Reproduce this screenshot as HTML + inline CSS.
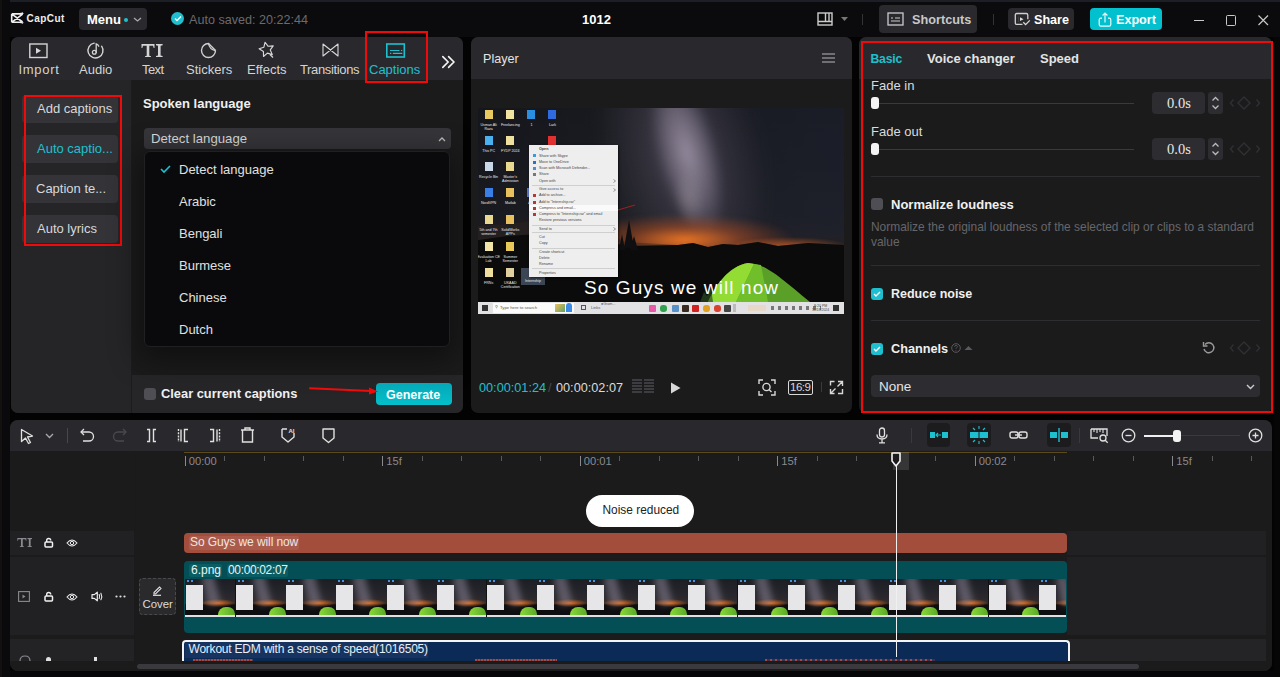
<!DOCTYPE html>
<html><head><meta charset="utf-8">
<style>
*{margin:0;padding:0;box-sizing:border-box}
html,body{width:1280px;height:677px;overflow:hidden;background:#030303;font-family:"Liberation Sans",sans-serif;color:#e4e4e4}
.a{position:absolute}
.t{position:absolute;white-space:nowrap;line-height:1}
svg{position:absolute;overflow:visible}
</style></head><body>
<div class="a" style="left:0;top:671px;width:1280px;height:6px;background:#060608"></div>
<!-- TOP BAR -->
<div class="a" style="left:0;top:0;width:1280px;height:37px;background:#0b0b0d"></div>
<div class="a" style="left:0;top:0;width:1280px;height:2px;background:#1c1f26"></div>
<div class="a" style="left:0;top:0;width:10px;height:677px;background:#0a0a0c"></div>
<div class="a" style="left:0;top:0;width:2px;height:677px;background:#121110"></div>
<div class="a" style="left:1274px;top:37px;width:6px;height:640px;background:#060607"></div>

<!-- logo -->
<svg style="left:10px;top:12px" width="15" height="13" viewBox="0 0 15 13"><path d="M1.7 1.9H9.5Q12 1.9 13.2 1M1.7 10.3H9.5Q12 10.3 13.2 11.2M1.7 1.9V10.3M2.6 2.6L12.6 10M2.6 9.6L12.6 2.2" stroke="#eee" stroke-width="1.6" fill="none" stroke-linejoin="round"/></svg>
<div class="t" style="left:26.5px;top:13.5px;font-size:10px;font-weight:bold;color:#eee;letter-spacing:0.45px">CapCut</div>

<div class="a" style="left:79px;top:8px;width:68px;height:22px;background:#2a2a2e;border-radius:4px"></div>
<div class="t" style="left:87px;top:13px;font-size:13px;font-weight:bold;color:#fff">Menu</div>
<div class="a" style="left:124px;top:18px;width:4px;height:4px;border-radius:50%;background:#1ec0cf"></div>
<svg style="left:133px;top:17px" width="9" height="5" viewBox="0 0 9 5"><path d="M1 1l3.5 3L8 1" stroke="#aaa" stroke-width="1.3" fill="none"/></svg>

<div class="a" style="left:171px;top:12px;width:13px;height:13px;border-radius:50%;background:#1ec0cf"></div>
<svg style="left:174px;top:15px" width="8" height="7" viewBox="0 0 8 7"><path d="M1 3.5l2 2L7 1.5" stroke="#fff" stroke-width="1.4" fill="none"/></svg>
<div class="t" style="left:189px;top:13.5px;font-size:12.6px;color:#6a6a6f">Auto saved: 20:22:44</div>

<div class="t" style="left:582px;top:13px;font-size:13px;font-weight:bold;color:#fff">1012</div>

<!-- layout icon -->
<svg style="left:817px;top:12px" width="16" height="14" viewBox="0 0 16 14"><rect x="1" y="1" width="14" height="12" fill="none" stroke="#ccc" stroke-width="1.4"/><path d="M1 9.5h14M8.5 1v8.5M12 1v8.5" stroke="#ccc" stroke-width="1.4"/></svg>
<svg style="left:841px;top:17px" width="8" height="5" viewBox="0 0 8 5"><path d="M0 0h7L3.5 4z" fill="#777"/></svg>
<div class="a" style="left:862px;top:14px;width:1px;height:11px;background:#333"></div>

<div class="a" style="left:879px;top:5px;width:98px;height:28px;background:#2a2a2e;border-radius:4px"></div>
<svg style="left:887px;top:12px" width="17" height="14" viewBox="0 0 17 14"><rect x="1" y="1" width="15" height="12" fill="none" stroke="#ccc" stroke-width="1.3"/><path d="M4 6h2M8 6h5M4 9h9" stroke="#ccc" stroke-width="1.2"/></svg>
<div class="t" style="left:912px;top:13.5px;font-size:12.7px;font-weight:bold;color:#c8c8c8">Shortcuts</div>
<div class="a" style="left:993px;top:14px;width:1px;height:11px;background:#333"></div>

<div class="a" style="left:1008px;top:8px;width:66px;height:22px;background:#2a2a2e;border-radius:4px"></div>
<svg style="left:1014px;top:12px" width="17" height="14" viewBox="0 0 17 14"><path d="M8.5 12.3H2.8Q1.3 12.3 1.3 10.8V3Q1.3 1.5 2.8 1.5H12.3Q13.8 1.5 13.8 3V7.3" fill="none" stroke="#cfcfcf" stroke-width="1.3"/><path d="M9.3 10.3L11.6 12.6 15.8 8.4" fill="none" stroke="#dcdcdc" stroke-width="1.3"/><path d="M6 5.3L9.5 7.2 6 9.1z" fill="#dcdcdc"/><path d="M4.6 4.5V10" stroke="#555" stroke-width=".6"/></svg>
<div class="t" style="left:1034px;top:13.5px;font-size:12.6px;font-weight:bold;color:#fff">Share</div>

<div class="a" style="left:1090px;top:8px;width:72px;height:22px;background:#02c0cd;border-radius:4px"></div>
<svg style="left:1097.5px;top:11.5px" width="14" height="15" viewBox="0 0 14 15"><path d="M4 6.2H2.8Q1.2 6.2 1.2 7.8V12.6Q1.2 14.2 2.8 14.2H11.2Q12.8 14.2 12.8 12.6V7.8Q12.8 6.2 11.2 6.2H10" stroke="#e8fbfc" stroke-width="1.2" fill="none"/><path d="M7 10.5V1.2M4.6 3.5L7 1.1 9.4 3.5" stroke="#e8fbfc" stroke-width="1.2" fill="none"/></svg>
<div class="t" style="left:1116px;top:13.5px;font-size:12.6px;font-weight:bold;color:#fff">Export</div>

<div class="a" style="left:1194px;top:19.6px;width:10px;height:1.3px;background:#c8c8c8"></div>
<div class="a" style="left:1226px;top:15.2px;width:10.3px;height:10.5px;border:1.3px solid #c8c8c8;border-radius:1.5px"></div>
<svg style="left:1257.7px;top:15.2px" width="10.5" height="10.5" viewBox="0 0 10.5 10.5"><path d="M0.5 0.5l9.5 9.5M10 0.5l-9.5 9.5" stroke="#c8c8c8" stroke-width="1.2"/></svg>

<!-- LEFT PANEL -->
<div class="a" id="lp" style="left:11px;top:37px;width:452px;height:376px;background:#1b1b1c;border-radius:7px;overflow:hidden">
  <div class="a" style="left:0;top:0;width:453px;height:43px;background:#29292d"></div>
  <div class="a" style="left:0;top:43px;width:120px;height:333px;background:#252528"></div>
  <div class="a" style="left:121px;top:338px;width:332px;height:38px;background:#262629"></div>
  <div class="a" style="left:119.5px;top:43px;width:1.5px;height:333px;background:#1c1c1d"></div>
</div>
<!-- tabs -->
<svg style="left:29px;top:42.5px" width="19" height="15" viewBox="0 0 19 15"><rect x="0.8" y="1" width="17.2" height="13.5" fill="none" stroke="#d4d4d4" stroke-width="1.4"/><path d="M7 4.7l5 3-5 3z" fill="#d8d8d8"/></svg>
<div class="t" style="left:18.5px;top:63px;font-size:13px;color:#d4d4d4;letter-spacing:0.7px">Import</div>
<svg style="left:87px;top:42px" width="17" height="17" viewBox="0 0 17 17"><path d="M14.64 4.2A7.5 7.5 0 1 1 7.2 1.11" fill="none" stroke="#d4d4d4" stroke-width="1.4" stroke-linecap="round"/><circle cx="7.3" cy="10.3" r="1.9" fill="none" stroke="#d4d4d4" stroke-width="1.3"/><path d="M9.2 10.3V1.8q1.8 .6 2.6 2.4" fill="none" stroke="#d4d4d4" stroke-width="1.3" stroke-linecap="round"/></svg>
<div class="t" style="left:79px;top:63px;font-size:13px;color:#d4d4d4">Audio</div>
<svg style="left:141px;top:43px" width="23" height="15" viewBox="0 0 23 15"><path d="M0.5 1h13v4h-0.8l-0.7-2.2H8.3V12.7l1.7 0.6V14H4v-0.7l1.7-0.6V2.8H2l-0.7 2.2H0.5z" fill="#d4d4d4"/><path d="M15 1h6.6v1.3l-2 0.5v9.8l2 0.5V14H15v-0.9l2-0.5V2.8l-2-0.5z" fill="#d4d4d4"/></svg>
<div class="t" style="left:142px;top:63px;font-size:13px;color:#d4d4d4;letter-spacing:-0.6px">Text</div>
<svg style="left:200px;top:42px" width="17" height="17" viewBox="0 0 17 17"><path d="M15.5 8.5A7 7 0 1 1 8.5 1.5L15.5 8.5" fill="none" stroke="#d0d0d0" stroke-width="1.4"/><path d="M8.5 1.5q1 6 7 7" fill="none" stroke="#d0d0d0" stroke-width="1.3"/></svg>
<div class="t" style="left:186px;top:63px;font-size:13px;color:#d4d4d4">Stickers</div>
<svg style="left:257px;top:41px" width="19" height="18" viewBox="0 0 19 18"><g transform="rotate(-12 9 8)"><path d="M9.5 1.2l2.2 4.6 5 .6-3.7 3.4 1 5-4.5-2.5-4.5 2.5 1-5L2.3 6.4l5-.6z" fill="none" stroke="#d8d8d8" stroke-width="1.15" stroke-linejoin="round"/></g><path d="M13 13.5l3 3" stroke="#d8d8d8" stroke-width="1.15"/></svg>
<div class="t" style="left:247px;top:63px;font-size:13px;color:#d4d4d4">Effects</div>
<svg style="left:322px;top:43px" width="17" height="14" viewBox="0 0 17 14"><path d="M1 1v12l15-12v12z" fill="none" stroke="#d8d8d8" stroke-width="1.1" stroke-linejoin="round"/></svg>
<div class="t" style="left:300px;top:63px;font-size:13px;color:#d4d4d4;letter-spacing:-0.35px">Transitions</div>
<svg style="left:385px;top:42px" width="21" height="16" viewBox="0 0 21 16"><rect x="1.8" y="2" width="17.5" height="13" fill="none" stroke="#1ec0cf" stroke-width="1.6"/><path d="M5 8.5h9.5M16 8.5h1.3M5 11.3h1.3M7.8 11.3h9.5" stroke="#1ec0cf" stroke-width="1.2"/></svg>
<div class="t" style="left:369px;top:63px;font-size:13px;color:#1ec0cf">Captions</div>
<div class="a" style="left:365px;top:31px;width:62.5px;height:52px;border:2px solid #f00a0a"></div>
<svg style="left:441px;top:55px" width="14" height="14" viewBox="0 0 14 14"><path d="M1.8 1.6l5.3 5.4-5.3 5.4M7.6 1.6l5.3 5.4-5.3 5.4" fill="none" stroke="#f4f4f4" stroke-width="1.6" stroke-linecap="round"/></svg>

<!-- sidebar buttons -->
<div class="a" style="left:22px;top:95px;width:96px;height:28px;background:#343438;border-radius:4px"></div>
<div class="t" style="left:37px;top:102px;font-size:13px;color:#d8d8d8">Add captions</div>
<div class="a" style="left:22px;top:135px;width:96px;height:28px;background:#343438;border-radius:4px"></div>
<div class="t" style="left:37px;top:142px;font-size:13px;color:#1ec0cf">Auto captio...</div>
<div class="a" style="left:22px;top:175px;width:96px;height:28px;background:#343438;border-radius:4px"></div>
<div class="t" style="left:36px;top:182px;font-size:13px;color:#d8d8d8">Caption te...</div>
<div class="a" style="left:22px;top:215px;width:96px;height:28px;background:#343438;border-radius:4px"></div>
<div class="t" style="left:37px;top:222px;font-size:13px;color:#d8d8d8">Auto lyrics</div>
<div class="a" style="left:24px;top:95px;width:98px;height:151px;border:2px solid #f00a0a"></div>

<!-- captions content -->
<div class="t" style="left:143px;top:97px;font-size:13px;font-weight:bold;color:#f0f0f0">Spoken language</div>
<div class="a" style="left:144px;top:128px;width:307px;height:21px;background:#36363a;border-radius:4px"></div>
<div class="t" style="left:151px;top:132px;font-size:13.2px;color:#dcdcdc">Detect language</div>
<svg style="left:438px;top:137px" width="8" height="5" viewBox="0 0 8 5"><path d="M1 4l3-3 3 3" fill="none" stroke="#bbb" stroke-width="1.3"/></svg>
<div class="a" style="left:144px;top:151px;width:306px;height:196px;background:#0a0a0c;border:1px solid #202023;border-radius:6px;box-shadow:0 8px 30px 6px rgba(0,0,0,.42)"></div>
<svg style="left:160px;top:165px" width="11" height="8" viewBox="0 0 11 8"><path d="M1 4l3 3 6-6" fill="none" stroke="#1ec0cf" stroke-width="1.6"/></svg>
<div class="t" style="left:179px;top:163px;font-size:13px;color:#e0e0e0">Detect language</div>
<div class="t" style="left:179px;top:195px;font-size:13px;color:#e0e0e0">Arabic</div>
<div class="t" style="left:179px;top:227px;font-size:13px;color:#e0e0e0">Bengali</div>
<div class="t" style="left:179px;top:259px;font-size:13px;color:#e0e0e0">Burmese</div>
<div class="t" style="left:179px;top:291px;font-size:13px;color:#e0e0e0">Chinese</div>
<div class="t" style="left:179px;top:323px;font-size:13px;color:#e0e0e0">Dutch</div>

<div class="a" style="left:144px;top:388px;width:12px;height:12px;background:#4e4e54;border-radius:3px"></div>
<div class="t" style="left:161px;top:388px;font-size:12.85px;font-weight:bold;color:#f0f0f0">Clear current captions</div>
<div class="a" style="left:375.7px;top:383px;width:76px;height:22px;background:linear-gradient(180deg,#05a8b6,#04bfcb);border-radius:4px"></div>
<div class="t" style="left:386px;top:388.5px;font-size:12.5px;font-weight:bold;color:#fff">Generate</div>
<svg style="left:308px;top:384px" width="72" height="12" viewBox="0 0 72 12"><path d="M2 4.2L63 6.9" stroke="#f00a0a" stroke-width="2" stroke-linecap="round"/><path d="M70 7.4L61 3.6 61 10.6z" fill="#f00a0a"/></svg>

<!-- PLAYER PANEL -->
<div class="a" id="pp" style="left:471px;top:37px;width:381px;height:376px;background:#1b1b1c;border-radius:7px;overflow:hidden">
  <div class="a" style="left:0;top:0;width:381px;height:42px;background:#29292d"></div>
  <div class="t" style="left:12px;top:16px;font-size:12.6px;color:#e4e4e4">Player</div>
  <div class="a" style="left:351px;top:16px;width:13px;height:1.5px;background:#707074;box-shadow:0 4px 0 #707074,0 8px 0 #707074"></div>
<div class="a" style="left:7px;top:71px;width:366px;height:206px;overflow:hidden;background:#17181c">
<div class="a" style="left:0;top:0;width:366px;height:206px;background:linear-gradient(180deg,#191a20 0%,#1d1e24 50%,#2a2324 85%,#2a1f1c 100%)"></div>
<div class="a" style="left:0;top:0;width:366px;height:130px;background:linear-gradient(90deg,rgba(0,0,0,.15) 0%,rgba(0,0,0,0) 40%,rgba(28,34,52,.35) 100%)"></div>
<div class="a" style="left:130px;top:-60px;width:160px;height:250px;background:radial-gradient(ellipse at 50% 42%,rgba(110,100,120,.5),rgba(90,80,100,0) 70%);transform:rotate(-15deg);filter:blur(8px)"></div>
<div class="a" style="left:178px;top:-40px;width:62px;height:170px;background:radial-gradient(ellipse at 50% 50%,rgba(175,165,185,.75),rgba(140,130,150,.45) 45%,rgba(90,80,100,0) 72%);transform:rotate(-15deg);filter:blur(4px)"></div>
<div class="a" style="left:196px;top:60px;width:30px;height:60px;background:radial-gradient(ellipse at 50% 50%,rgba(150,140,150,.5),rgba(120,110,120,0) 72%);transform:rotate(-8deg);filter:blur(3px)"></div>
<div class="a" style="left:90px;top:90px;width:276px;height:55px;background:radial-gradient(ellipse 110px 26px at 117px 42px,rgba(245,120,35,.95),rgba(190,80,30,.5) 50%,rgba(120,60,40,0) 100%);filter:blur(2px)"></div>
<div class="a" style="left:250px;top:124px;width:116px;height:18px;background:radial-gradient(ellipse 60px 9px at 60px 14px,rgba(220,100,40,.7),rgba(220,100,40,0) 100%)"></div>
<svg style="left:0;top:0" width="366" height="206" viewBox="0 0 366 206"><path d="M0 118 L30 116 60 112 90 118 120 124 140 130 147 134 200 137 215 135 230 139 245 136 260 137 280 134 300 138 330 135 366 137 V206 H0Z" fill="#2e2620" opacity=".45"/><path d="M0 132 L30 128 60 126 90 131 120 134 140 136 147 138 200 137 215 135 230 139 245 136 260 137 280 134 300 138 330 135 366 137 V206 H0Z" fill="#0b0b0c"/><path d="M146 140 l5 -28 5 28z M141 142 l3 -16 3 16z M152 142l4-14 4 14z" fill="#0f0f11"/>
<path d="M230 194 C236 180 250 158 270 155 C288 156 300 168 332 194Z" fill="#5aa028"/><path d="M230 194 C236 180 250 158 270 155 L276 156 L258 194Z" fill="#92dc34"/><path d="M258 194 L276 156 L283 157 L290 194Z" fill="#70be2a"/><path d="M222 194 l4-10 3 4 4-8 2 14z" fill="#2a4a20" opacity=".7"/></svg>
<div class="a" style="left:7px;top:2px;width:8px;height:9px;background:#e8c860"></div>
<div class="a" style="left:28px;top:2px;width:8px;height:9px;background:#f0e2a0"></div>
<div class="a" style="left:49px;top:2px;width:8px;height:9px;background:#2a8fe0"></div>
<div class="a" style="left:70px;top:2px;width:8px;height:9px;background:#2f6ae0"></div>
<div class="a" style="left:7px;top:28px;width:8px;height:9px;background:#4ab0f0"></div>
<div class="a" style="left:28px;top:28px;width:8px;height:9px;background:#f0e0a0"></div>
<div class="a" style="left:70px;top:28px;width:8px;height:9px;background:#e03030"></div>
<div class="a" style="left:7px;top:54px;width:8px;height:9px;background:#c8d8e8"></div>
<div class="a" style="left:28px;top:54px;width:8px;height:9px;background:#e8d890"></div>
<div class="a" style="left:7px;top:80px;width:8px;height:9px;background:#3a7fe8"></div>
<div class="a" style="left:28px;top:80px;width:8px;height:9px;background:#e8c060"></div>
<div class="a" style="left:49px;top:80px;width:8px;height:9px;background:#5a70c0"></div>
<div class="a" style="left:7px;top:107px;width:8px;height:9px;background:#e8d890"></div>
<div class="a" style="left:28px;top:107px;width:8px;height:9px;background:#e8c060"></div>
<div class="a" style="left:7px;top:134px;width:8px;height:9px;background:#f0e4a8"></div>
<div class="a" style="left:28px;top:134px;width:8px;height:9px;background:#e8c858"></div>
<div class="a" style="left:7px;top:160px;width:8px;height:9px;background:#f0e0a0"></div>
<div class="a" style="left:28px;top:160px;width:8px;height:9px;background:#e0d0a0"></div>
<div class="a" style="left:43px;top:160px;width:24px;height:17px;background:rgba(120,140,170,.45)"></div>
<div class="t" style="left:-1.4px;top:15.0px;width:24px;text-align:center;font-size:3.6px;line-height:4.2px;color:#e8e8e8;white-space:nowrap">Usman Ali<br>Raza</div>
<div class="t" style="left:20.3px;top:15.0px;width:24px;text-align:center;font-size:3.6px;line-height:4.2px;color:#e8e8e8;white-space:nowrap">Freelancing</div>
<div class="t" style="left:41.4px;top:15.0px;width:24px;text-align:center;font-size:3.6px;line-height:4.2px;color:#e8e8e8;white-space:nowrap">1</div>
<div class="t" style="left:62.5px;top:15.0px;width:24px;text-align:center;font-size:3.6px;line-height:4.2px;color:#e8e8e8;white-space:nowrap">Lark</div>
<div class="t" style="left:-1.4px;top:41.0px;width:24px;text-align:center;font-size:3.6px;line-height:4.2px;color:#e8e8e8;white-space:nowrap">This PC</div>
<div class="t" style="left:20.3px;top:41.0px;width:24px;text-align:center;font-size:3.6px;line-height:4.2px;color:#e8e8e8;white-space:nowrap">FYDP 2024</div>
<div class="t" style="left:-1.4px;top:67.0px;width:24px;text-align:center;font-size:3.6px;line-height:4.2px;color:#e8e8e8;white-space:nowrap">Recycle Bin</div>
<div class="t" style="left:20.3px;top:67.0px;width:24px;text-align:center;font-size:3.6px;line-height:4.2px;color:#e8e8e8;white-space:nowrap">Master's<br>Admission</div>
<div class="t" style="left:-1.4px;top:93.0px;width:24px;text-align:center;font-size:3.6px;line-height:4.2px;color:#e8e8e8;white-space:nowrap">NordVPN</div>
<div class="t" style="left:20.3px;top:93.0px;width:24px;text-align:center;font-size:3.6px;line-height:4.2px;color:#e8e8e8;white-space:nowrap">Matlab</div>
<div class="t" style="left:-1.4px;top:120.0px;width:24px;text-align:center;font-size:3.6px;line-height:4.2px;color:#e8e8e8;white-space:nowrap">5th and 7th<br>semester</div>
<div class="t" style="left:20.3px;top:120.0px;width:24px;text-align:center;font-size:3.6px;line-height:4.2px;color:#e8e8e8;white-space:nowrap">SolidWorks<br>APPs</div>
<div class="t" style="left:-1.4px;top:147.0px;width:24px;text-align:center;font-size:3.6px;line-height:4.2px;color:#e8e8e8;white-space:nowrap">Evaluation CE<br>Lab</div>
<div class="t" style="left:20.3px;top:147.0px;width:24px;text-align:center;font-size:3.6px;line-height:4.2px;color:#e8e8e8;white-space:nowrap">Summer<br>Semester</div>
<div class="t" style="left:-1.4px;top:173.0px;width:24px;text-align:center;font-size:3.6px;line-height:4.2px;color:#e8e8e8;white-space:nowrap">FRNs</div>
<div class="t" style="left:20.3px;top:173.0px;width:24px;text-align:center;font-size:3.6px;line-height:4.2px;color:#e8e8e8;white-space:nowrap">UKAAD<br>Certification</div>
<div class="t" style="left:41.4px;top:93.0px;width:24px;text-align:center;font-size:3.6px;line-height:4.2px;color:#e8e8e8;white-space:nowrap">Abe</div>
<div class="t" style="left:45px;top:172px;width:20px;text-align:center;font-size:3.6px;color:#e8e8e8">Internship</div>
<div class="a" style="left:51px;top:37px;width:89px;height:132px;background:#eeeeee;box-shadow:1px 1px 2px rgba(0,0,0,.6)"></div>
<div class="a" style="left:51px;top:97px;width:89px;height:6px;background:#fafafa"></div>
<div class="a" style="left:54px;top:77.0px;width:83px;height:1px;background:#cfcfcf"></div>
<div class="a" style="left:54px;top:116.5px;width:83px;height:1px;background:#cfcfcf"></div>
<div class="a" style="left:54px;top:124.0px;width:83px;height:1px;background:#cfcfcf"></div>
<div class="a" style="left:54px;top:139.5px;width:83px;height:1px;background:#cfcfcf"></div>
<div class="a" style="left:54px;top:160.0px;width:83px;height:1px;background:#cfcfcf"></div>
<div class="t" style="left:61px;top:40.1px;font-size:3.7px;font-weight:bold;color:#444">Open</div>
<div class="t" style="left:61px;top:46.5px;font-size:3.7px;color:#444">Share with Skype</div>
<div class="a" style="left:55px;top:46.3px;width:3px;height:3px;background:#3a9ae0"></div>
<div class="t" style="left:61px;top:52.7px;font-size:3.7px;color:#444">Move to OneDrive</div>
<div class="a" style="left:55px;top:52.5px;width:3px;height:3px;background:#2a70d0"></div>
<div class="t" style="left:61px;top:59.1px;font-size:3.7px;color:#444">Scan with Microsoft Defender...</div>
<div class="a" style="left:55px;top:58.9px;width:3px;height:3px;background:#4a90d0"></div>
<div class="t" style="left:61px;top:65.3px;font-size:3.7px;color:#444">Share</div>
<div class="a" style="left:55px;top:65.1px;width:3px;height:3px;background:#777"></div>
<div class="t" style="left:61px;top:71.7px;font-size:3.7px;color:#444">Open with</div>
<div class="t" style="left:61px;top:80.2px;font-size:3.7px;color:#444">Give access to</div>
<div class="t" style="left:61px;top:86.4px;font-size:3.7px;color:#444">Add to archive...</div>
<div class="a" style="left:55px;top:86.2px;width:3px;height:3px;background:#b03a3a"></div>
<div class="t" style="left:61px;top:92.7px;font-size:3.7px;color:#444">Add to &quot;Internship.rar&quot;</div>
<div class="a" style="left:55px;top:92.5px;width:3px;height:3px;background:#b03a3a"></div>
<div class="t" style="left:61px;top:99.0px;font-size:3.7px;color:#444">Compress and email...</div>
<div class="a" style="left:55px;top:98.8px;width:3px;height:3px;background:#b03a3a"></div>
<div class="t" style="left:61px;top:105.2px;font-size:3.7px;color:#444">Compress to &quot;Internship.rar&quot; and email</div>
<div class="a" style="left:55px;top:105.0px;width:3px;height:3px;background:#b03a3a"></div>
<div class="t" style="left:61px;top:111.4px;font-size:3.7px;color:#444">Restore previous versions</div>
<div class="t" style="left:61px;top:119.5px;font-size:3.7px;color:#444">Send to</div>
<div class="t" style="left:61px;top:128.1px;font-size:3.7px;color:#444">Cut</div>
<div class="t" style="left:61px;top:134.3px;font-size:3.7px;color:#444">Copy</div>
<div class="t" style="left:61px;top:142.7px;font-size:3.7px;color:#444">Create shortcut</div>
<div class="t" style="left:61px;top:149.0px;font-size:3.7px;color:#444">Delete</div>
<div class="t" style="left:61px;top:155.3px;font-size:3.7px;color:#444">Rename</div>
<div class="t" style="left:61px;top:163.6px;font-size:3.7px;color:#444">Properties</div>
<svg style="left:135px;top:71.0px" width="3" height="4" viewBox="0 0 3 4"><path d="M0.5 0.5L2.5 2 0.5 3.5" fill="none" stroke="#555" stroke-width=".6"/></svg>
<svg style="left:135px;top:79.5px" width="3" height="4" viewBox="0 0 3 4"><path d="M0.5 0.5L2.5 2 0.5 3.5" fill="none" stroke="#555" stroke-width=".6"/></svg>
<svg style="left:135px;top:118.8px" width="3" height="4" viewBox="0 0 3 4"><path d="M0.5 0.5L2.5 2 0.5 3.5" fill="none" stroke="#555" stroke-width=".6"/></svg>
<svg style="left:140px;top:97px" width="18" height="6" viewBox="0 0 18 6"><path d="M0 5L17 0" stroke="#c02020" stroke-width="0.8"/></svg>
<div class="a" style="left:0;top:194px;width:366px;height:12px;background:#e2e2e4"></div>
<div class="a" style="left:15px;top:195px;width:81px;height:10px;background:#fbfbfb"></div>
<div class="a" style="left:4px;top:197px;width:6px;height:6px;background:linear-gradient(90deg,#333 45%,transparent 45% 55%,#333 55%),linear-gradient(180deg,transparent 45%,#e2e2e4 45% 55%,transparent 55%)"></div>
<div class="t" style="left:17px;top:197.5px;font-size:3.8px;color:#555">&#9906;</div>
<div class="t" style="left:22px;top:197.5px;font-size:4.2px;color:#555">Type here to search</div>
<div class="a" style="left:77px;top:196px;width:10px;height:8px;background:linear-gradient(135deg,#f0c060,#60a060)"></div>
<div class="a" style="left:88px;top:195px;width:6px;height:9px;border-radius:3px 3px 0 0;background:#3a8ae8"></div>
<div class="a" style="left:103px;top:197px;width:5px;height:5px;border:0.7px solid #555"></div>
<div class="t" style="left:113px;top:197.5px;font-size:4px;color:#555">Links</div>
<div class="t" style="left:123px;top:195px;font-size:3.6px;color:#555">&#9679;Gram...</div>
<div class="a" style="left:171px;top:196.5px;width:7px;height:7px;border-radius:1px;background:#e858a8"></div>
<div class="a" style="left:182px;top:196.5px;width:7px;height:7px;border-radius:3px;background:#30a050"></div>
<div class="a" style="left:194px;top:196.5px;width:7px;height:7px;border-radius:1px;background:#5a90c8"></div>
<div class="a" style="left:204px;top:196.5px;width:7px;height:7px;border-radius:1px;background:#3a2a20"></div>
<div class="a" style="left:214px;top:196.5px;width:7px;height:7px;border-radius:1px;background:#d02020"></div>
<div class="a" style="left:225px;top:196.5px;width:7px;height:7px;border-radius:3px;background:#e0a020"></div>
<div class="a" style="left:236px;top:196.5px;width:7px;height:7px;border-radius:3px;background:#d84030"></div>
<div class="a" style="left:246px;top:196.5px;width:7px;height:7px;border-radius:1px;background:#444"></div>
<div class="a" style="left:255px;top:196px;width:3px;height:8px;background:#bbb"></div>
<div class="a" style="left:270px;top:197px;width:18px;height:6px;background:#e8d8c8"></div>
<div class="a" style="left:293px;top:198px;width:50px;height:4px;background:repeating-linear-gradient(90deg,#777 0 3px,transparent 3px 7px)"></div>
<div class="t" style="left:334px;top:195.5px;font-size:3.5px;color:#444;line-height:4px;text-align:center">8:20 PM<br>11/18/2024</div>
<div class="a" style="left:355px;top:197px;width:6px;height:6px;background:#333"></div>
<div class="t" style="left:106px;top:170px;font-size:19px;color:#fff;letter-spacing:1.1px">So Guys we will now</div>
</div>
  <div class="t" style="left:8px;top:345px;font-size:12.7px;color:#1ec0cf">00:00:01:24</div>
  <div class="t" style="left:77px;top:345px;font-size:12.7px;color:#4a4a4e">/</div>
  <div class="t" style="left:85px;top:345px;font-size:12.7px;color:#dcdcdc">00:00:02:07</div>
  <svg style="left:161px;top:342px" width="23" height="16" viewBox="0 0 23 16"><path d="M0 1h10M0 4h10M0 7h10M0 10h10M0 13h10M12 1h10M12 4h10M12 7h10M12 10h10M12 13h10" stroke="#4a4a4e" stroke-width="1.6"/></svg>
  <svg style="left:199px;top:345px" width="11" height="12" viewBox="0 0 11 12"><path d="M1 0.5L10.5 6 1 11.5z" fill="#d8d8d8"/></svg>
  <svg style="left:287px;top:342px" width="18" height="17" viewBox="0 0 18 17"><path d="M1 5V1h4M13 1h4v4M17 12v4h-4M5 16H1v-4" fill="none" stroke="#d8d8d8" stroke-width="1.4"/><circle cx="8.5" cy="8" r="3.6" fill="none" stroke="#d8d8d8" stroke-width="1.4"/><path d="M11 10.5l2.5 2.5" stroke="#d8d8d8" stroke-width="1.4"/></svg>
  <div class="a" style="left:317px;top:343px;width:25px;height:15px;border:1.3px solid #d8d8d8;border-radius:2px"></div>
  <div class="t" style="left:319px;top:345px;font-size:11.5px;color:#d8d8d8;letter-spacing:-0.5px">16:9</div>
  <div class="a" style="left:350px;top:345px;width:1px;height:10px;background:#3a3a3e"></div>
  <svg style="left:357.7px;top:342.5px" width="15" height="15" viewBox="0 0 15 15"><path d="M1.5 5.5V1.5H5.5M9 1.5h4.5v4.5M13.5 9v4.5H9M5.5 13.5H1.5V9M8.5 6.5l4.5-4.5M2 13l4.5-4.5" fill="none" stroke="#d8d8d8" stroke-width="1.4"/></svg>
</div>

<!-- RIGHT PANEL -->
<div class="a" id="rp" style="left:859px;top:37px;width:413px;height:376px;background:#1b1b1c;border-radius:7px;overflow:hidden">
  <div class="a" style="left:0;top:0;width:413px;height:42px;background:#29292d"></div>
</div>
<div class="t" style="left:870.5px;top:52.5px;font-size:12.2px;font-weight:bold;color:#1ec0cf;letter-spacing:-0.2px">Basic</div>
<div class="t" style="left:927px;top:52px;font-size:13px;font-weight:bold;color:#e4e4e4">Voice changer</div>
<div class="t" style="left:1040px;top:52px;font-size:13px;font-weight:bold;color:#e4e4e4">Speed</div>

<div class="t" style="left:871px;top:79px;font-size:13px;color:#dcdcdc">Fade in</div>
<div class="a" style="left:879px;top:102.5px;width:255px;height:1.5px;background:#3a3a3e"></div>
<div class="a" style="left:871px;top:97px;width:8px;height:12px;background:#f4f4f4;border-radius:3px"></div>
<div class="a" style="left:1152px;top:92px;width:53px;height:22px;background:#2d2d31;border-radius:4px"></div>
<div class="t" style="left:1167px;top:96px;font-size:14.5px;color:#e8e8e8;font-family:'Liberation Serif',serif">0.0s</div>
<div class="a" style="left:1208px;top:92px;width:15px;height:22px;background:#2d2d31;border-radius:3px"></div>
<svg style="left:1211px;top:96px" width="9" height="14" viewBox="0 0 9 14"><path d="M1.5 4.5l3-3 3 3M1.5 9.5l3 3 3-3" fill="none" stroke="#bbb" stroke-width="1.3"/></svg>
<svg style="left:1229px;top:98px" width="32" height="10" viewBox="0 0 32 10"><path d="M4.5 1.5L1.5 5l3 3.5M27.5 1.5l3 3.5-3 3.5M15 -1l6 6-6 6-6-6z" fill="none" stroke="#303034" stroke-width="1.4"/></svg>

<div class="t" style="left:871px;top:125px;font-size:13px;color:#dcdcdc">Fade out</div>
<div class="a" style="left:879px;top:148.5px;width:255px;height:1.5px;background:#3a3a3e"></div>
<div class="a" style="left:871px;top:143px;width:8px;height:12px;background:#f4f4f4;border-radius:3px"></div>
<div class="a" style="left:1152px;top:138px;width:53px;height:22px;background:#2d2d31;border-radius:4px"></div>
<div class="t" style="left:1167px;top:142px;font-size:14.5px;color:#e8e8e8;font-family:'Liberation Serif',serif">0.0s</div>
<div class="a" style="left:1208px;top:138px;width:15px;height:22px;background:#2d2d31;border-radius:3px"></div>
<svg style="left:1211px;top:142px" width="9" height="14" viewBox="0 0 9 14"><path d="M1.5 4.5l3-3 3 3M1.5 9.5l3 3 3-3" fill="none" stroke="#bbb" stroke-width="1.3"/></svg>
<svg style="left:1229px;top:144px" width="32" height="10" viewBox="0 0 32 10"><path d="M4.5 1.5L1.5 5l3 3.5M27.5 1.5l3 3.5-3 3.5M15 -1l6 6-6 6-6-6z" fill="none" stroke="#303034" stroke-width="1.4"/></svg>

<div class="a" style="left:871px;top:176px;width:389px;height:1px;background:#2e2e32"></div>
<div class="a" style="left:871px;top:198px;width:12px;height:12px;background:#4e4e54;border-radius:3px"></div>
<div class="t" style="left:891px;top:198px;font-size:13px;font-weight:bold;color:#f0f0f0">Normalize loudness</div>
<div class="t" style="left:871px;top:220px;font-size:11.95px;color:#66666a;line-height:15px;white-space:normal;width:395px">Normalize the original loudness of the selected clip or clips to a standard value</div>
<div class="a" style="left:871px;top:265px;width:389px;height:1px;background:#2e2e32"></div>

<div class="a" style="left:871px;top:288px;width:12px;height:12px;background:#1ec0cf;border-radius:3px"></div>
<svg style="left:873px;top:290px" width="8" height="8" viewBox="0 0 8 8"><path d="M1 4l2 2 4-4" fill="none" stroke="#fff" stroke-width="1.4"/></svg>
<div class="t" style="left:891px;top:288px;font-size:12.5px;font-weight:bold;color:#f0f0f0">Reduce noise</div>
<div class="a" style="left:871px;top:320px;width:389px;height:1px;background:#2e2e32"></div>

<div class="a" style="left:871px;top:343px;width:12px;height:12px;background:#1ec0cf;border-radius:3px"></div>
<svg style="left:873px;top:345px" width="8" height="8" viewBox="0 0 8 8"><path d="M1 4l2 2 4-4" fill="none" stroke="#fff" stroke-width="1.4"/></svg>
<div class="t" style="left:891px;top:343px;font-size:12.7px;font-weight:bold;color:#f0f0f0">Channels</div>
<svg style="left:951px;top:343px" width="10" height="10" viewBox="0 0 10 10"><circle cx="5" cy="5" r="4.3" fill="none" stroke="#5a5a5e" stroke-width="1"/><path d="M3.6 3.8q.2-1.4 1.4-1.4t1.4 1.2q0 .8-1 1.3-.4.3-.4.9" fill="none" stroke="#5a5a5e" stroke-width=".9"/><circle cx="5" cy="7.4" r=".5" fill="#5a5a5e"/></svg>
<svg style="left:964px;top:345px" width="9" height="6" viewBox="0 0 9 6"><path d="M0.5 5L4.5 1 8.5 5z" fill="#5a5a5e"/></svg>
<svg style="left:1202px;top:341px" width="14" height="14" viewBox="0 0 14 14"><path d="M3 3.5A5 5 0 1 1 2 8" fill="none" stroke="#9a9a9e" stroke-width="1.4"/><path d="M1.5 1v4h4" fill="none" stroke="#9a9a9e" stroke-width="1.4"/></svg>
<svg style="left:1229px;top:343px" width="32" height="10" viewBox="0 0 32 10"><path d="M4.5 1.5L1.5 5l3 3.5M27.5 1.5l3 3.5-3 3.5M15 -1l6 6-6 6-6-6z" fill="none" stroke="#303034" stroke-width="1.4"/></svg>

<div class="a" style="left:871px;top:375px;width:389px;height:22px;background:#2d2d31;border-radius:4px"></div>
<div class="t" style="left:879px;top:380px;font-size:13.5px;color:#e4e4e4">None</div>
<svg style="left:1246px;top:384px" width="9" height="6" viewBox="0 0 9 6"><path d="M1 1l3.5 3.5L8 1" fill="none" stroke="#ccc" stroke-width="1.4"/></svg>

<div class="a" style="left:861px;top:41px;width:412px;height:372px;border:2px solid #f00a0a"></div>

<!-- TIMELINE -->
<div class="a" id="tl" style="left:10px;top:420px;width:1262px;height:251px;background:#1b1b1c;border-radius:8px;overflow:hidden">
  <div class="a" style="left:0;top:0;width:1262px;height:31px;background:#29292d"></div>
  <div class="a" style="left:124px;top:31px;width:1138px;height:220px;background:#1b1b1c;border-radius:0 0 8px 0"></div>
  <div class="a" style="left:0;top:111px;width:124px;height:24px;background:#212124"></div>
  <div class="a" style="left:0;top:137px;width:124px;height:78px;background:#212124"></div>
  <div class="a" style="left:0;top:219px;width:124px;height:22px;background:#232325"></div>
  <div class="a" style="left:1057px;top:111px;width:199px;height:24px;background:#212124"></div>
  <div class="a" style="left:1057px;top:137px;width:199px;height:78px;background:#212124"></div>
  <div class="a" style="left:1057px;top:219px;width:199px;height:22px;background:#242426"></div>
  <div class="a" style="left:124px;top:31px;width:1px;height:219px;background:#1a1a1c"></div>
</div>
<!-- toolbar icons -->
<svg style="left:20px;top:428px" width="14" height="16" viewBox="0 0 14 16"><path d="M1.5 1.5L12.5 8 7.5 9 10.5 14.5 8.5 15.5 5.5 10 1.5 13.5z" fill="none" stroke="#e0e0e0" stroke-width="1.3" stroke-linejoin="round"/></svg>
<svg style="left:45px;top:433px" width="9" height="6" viewBox="0 0 9 6"><path d="M1 1l3.5 3.5L8 1" fill="none" stroke="#aaa" stroke-width="1.3"/></svg>
<div class="a" style="left:67px;top:428px;width:1px;height:15px;background:#48484c"></div>
<svg style="left:80px;top:428px" width="15" height="15" viewBox="0 0 15 15"><path d="M4 1L1 4l3 3" fill="none" stroke="#e0e0e0" stroke-width="1.3"/><path d="M1.5 4H9a4.5 4.5 0 0 1 0 9H3" fill="none" stroke="#e0e0e0" stroke-width="1.3"/></svg>
<svg style="left:112px;top:428px" width="15" height="15" viewBox="0 0 15 15"><path d="M11 1l3 3-3 3" fill="none" stroke="#4a4a4e" stroke-width="1.3"/><path d="M13.5 4H6a4.5 4.5 0 0 0 0 9h6" fill="none" stroke="#4a4a4e" stroke-width="1.3"/></svg>
<svg style="left:146px;top:428px" width="11" height="15" viewBox="0 0 11 15"><path d="M1 1.5h2.5v12H1M10 1.5H7.5v12H10" fill="none" stroke="#e0e0e0" stroke-width="1.4"/></svg>
<svg style="left:177px;top:428px" width="12" height="15" viewBox="0 0 12 15"><path d="M1.5 1v13" stroke="#e0e0e0" stroke-width="1.4" stroke-dasharray="2 1.2"/><path d="M11 1.5H7.5v12H11M4 1.5v12" fill="none" stroke="#e0e0e0" stroke-width="1.4"/></svg>
<svg style="left:209px;top:428px" width="12" height="15" viewBox="0 0 12 15"><path d="M10.5 1v13" stroke="#e0e0e0" stroke-width="1.4" stroke-dasharray="2 1.2"/><path d="M1 1.5h3.5v12H1M8 1.5v12" fill="none" stroke="#e0e0e0" stroke-width="1.4"/></svg>
<svg style="left:240px;top:427px" width="15" height="16" viewBox="0 0 15 16"><path d="M1 3h13M5 3V1h5v2M2.5 3v12h10V3" fill="none" stroke="#e0e0e0" stroke-width="1.4"/></svg>
<svg style="left:281px;top:427px" width="14" height="16" viewBox="0 0 14 16"><path d="M1 2h5M1 2v8l6 5 6-5V6" fill="none" stroke="#e0e0e0" stroke-width="1.4" stroke-linejoin="round"/><text x="7.5" y="6" font-size="6" font-weight="bold" fill="#e0e0e0" font-family="Liberation Sans">AI</text></svg>
<svg style="left:322px;top:428px" width="13" height="15" viewBox="0 0 13 15"><path d="M1 1h11v9l-5.5 4.5L1 10z" fill="none" stroke="#e0e0e0" stroke-width="1.4" stroke-linejoin="round"/></svg>

<svg style="left:876px;top:427px" width="12" height="17" viewBox="0 0 12 17"><rect x="3.5" y="1" width="5" height="9" rx="2.5" fill="none" stroke="#e0e0e0" stroke-width="1.3"/><path d="M1 7.5q0 4.5 5 4.5t5-4.5M6 12v3.5M3 15.8h6" fill="none" stroke="#e0e0e0" stroke-width="1.3"/></svg>
<div class="a" style="left:911px;top:428px;width:1px;height:15px;background:#3a3a3e"></div>
<div class="a" style="left:927px;top:423px;width:23px;height:24px;background:#1c1c1f;border-radius:4px"></div>
<svg style="left:929px;top:430px" width="20" height="10" viewBox="0 0 20 10"><rect x="1" y="2" width="5" height="6" fill="#1ec0cf"/><rect x="13" y="2" width="6" height="6" fill="#1ec0cf"/><path d="M12 5H7M9 3L7 5l2 2" fill="none" stroke="#1ec0cf" stroke-width="1.1"/></svg>
<div class="a" style="left:967px;top:423px;width:24px;height:24px;background:#1c1c1f;border-radius:4px"></div>
<svg style="left:969px;top:425px" width="20" height="20" viewBox="0 0 20 20"><rect x="1" y="7" width="18" height="6" fill="#1ec0cf"/><path d="M10 1v3M10 16v3M4 3l2 2M16 3l-2 2M4 17l2-2M16 17l-2-2" stroke="#1ec0cf" stroke-width="1.1"/><path d="M10 7v6" stroke="#1c1c1f" stroke-width="1"/></svg>
<svg style="left:1009px;top:430px" width="19" height="10" viewBox="0 0 19 10"><rect x="1" y="2" width="8" height="6" rx="2" fill="none" stroke="#e0e0e0" stroke-width="1.4"/><rect x="10" y="2" width="8" height="6" rx="2" fill="none" stroke="#e0e0e0" stroke-width="1.4"/><path d="M6 5h7" stroke="#e0e0e0" stroke-width="1.4"/></svg>
<div class="a" style="left:1047px;top:423px;width:24px;height:24px;background:#1c1c1f;border-radius:4px"></div>
<svg style="left:1049px;top:427px" width="20" height="16" viewBox="0 0 20 16"><rect x="1" y="5" width="7" height="6" fill="#1ec0cf"/><rect x="12" y="5" width="7" height="6" fill="#1ec0cf"/><path d="M10 1v14" stroke="#1ec0cf" stroke-width="1.4"/></svg>
<div class="a" style="left:1079px;top:428px;width:1px;height:15px;background:#3a3a3e"></div>
<svg style="left:1090px;top:428px" width="19" height="15" viewBox="0 0 19 15"><path d="M1 1h16v7" fill="none" stroke="#e0e0e0" stroke-width="1.3"/><path d="M1 1v9h7" fill="none" stroke="#e0e0e0" stroke-width="1.3"/><path d="M4 1v3M7 1v4M10 1v3M13 1v4" stroke="#e0e0e0" stroke-width="1.1"/><circle cx="13" cy="10" r="3" fill="none" stroke="#e0e0e0" stroke-width="1.3"/><path d="M15.2 12.2l2.5 2.5" stroke="#e0e0e0" stroke-width="1.3"/></svg>
<svg style="left:1121px;top:428px" width="15" height="15" viewBox="0 0 15 15"><circle cx="7.5" cy="7.5" r="6.3" fill="none" stroke="#e0e0e0" stroke-width="1.3"/><path d="M4.5 7.5h6" stroke="#e0e0e0" stroke-width="1.3"/></svg>
<div class="a" style="left:1144px;top:435px;width:96px;height:1px;background:#3a3a3e"></div>
<div class="a" style="left:1144px;top:434.5px;width:32px;height:2px;background:#f0f0f0"></div>
<div class="a" style="left:1173px;top:430px;width:8px;height:12px;background:#f4f4f4;border-radius:3px"></div>
<svg style="left:1248px;top:428px" width="15" height="15" viewBox="0 0 15 15"><circle cx="7.5" cy="7.5" r="6.3" fill="none" stroke="#e0e0e0" stroke-width="1.3"/><path d="M4.5 7.5h6M7.5 4.5v6" stroke="#e0e0e0" stroke-width="1.3"/></svg>

<!-- ruler -->
<div class="a" style="left:184px;top:452px;width:883px;height:1px;background:#5a4a1c"></div>
<div class="a" style="left:184.8px;top:456px;width:1px;height:10px;background:#8a8a8e"></div>
<div class="t" style="left:188.8px;top:456px;font-size:11.2px;color:#8a8a8e">00:00</div>
<div class="a" style="left:224.3px;top:456px;width:1px;height:5px;background:#5a5a5e"></div>
<div class="a" style="left:263.8px;top:456px;width:1px;height:5px;background:#5a5a5e"></div>
<div class="a" style="left:303.3px;top:456px;width:1px;height:5px;background:#5a5a5e"></div>
<div class="a" style="left:342.8px;top:456px;width:1px;height:5px;background:#5a5a5e"></div>
<div class="a" style="left:382.3px;top:456px;width:1px;height:10px;background:#8a8a8e"></div>
<div class="t" style="left:386.3px;top:456px;font-size:11.2px;color:#8a8a8e">15f</div>
<div class="a" style="left:421.8px;top:456px;width:1px;height:5px;background:#5a5a5e"></div>
<div class="a" style="left:461.3px;top:456px;width:1px;height:5px;background:#5a5a5e"></div>
<div class="a" style="left:500.8px;top:456px;width:1px;height:5px;background:#5a5a5e"></div>
<div class="a" style="left:540.3px;top:456px;width:1px;height:5px;background:#5a5a5e"></div>
<div class="a" style="left:579.8px;top:456px;width:1px;height:10px;background:#8a8a8e"></div>
<div class="t" style="left:583.8px;top:456px;font-size:11.2px;color:#8a8a8e">00:01</div>
<div class="a" style="left:619.3px;top:456px;width:1px;height:5px;background:#5a5a5e"></div>
<div class="a" style="left:658.8px;top:456px;width:1px;height:5px;background:#5a5a5e"></div>
<div class="a" style="left:698.3px;top:456px;width:1px;height:5px;background:#5a5a5e"></div>
<div class="a" style="left:737.8px;top:456px;width:1px;height:5px;background:#5a5a5e"></div>
<div class="a" style="left:777.3px;top:456px;width:1px;height:10px;background:#8a8a8e"></div>
<div class="t" style="left:781.3px;top:456px;font-size:11.2px;color:#8a8a8e">15f</div>
<div class="a" style="left:816.8px;top:456px;width:1px;height:5px;background:#5a5a5e"></div>
<div class="a" style="left:856.3px;top:456px;width:1px;height:5px;background:#5a5a5e"></div>
<div class="a" style="left:895.8px;top:456px;width:1px;height:5px;background:#5a5a5e"></div>
<div class="a" style="left:935.3px;top:456px;width:1px;height:5px;background:#5a5a5e"></div>
<div class="a" style="left:974.8px;top:456px;width:1px;height:10px;background:#8a8a8e"></div>
<div class="t" style="left:978.8px;top:456px;font-size:11.2px;color:#8a8a8e">00:02</div>
<div class="a" style="left:1014.3px;top:456px;width:1px;height:5px;background:#5a5a5e"></div>
<div class="a" style="left:1053.8px;top:456px;width:1px;height:5px;background:#5a5a5e"></div>
<div class="a" style="left:1093.3px;top:456px;width:1px;height:5px;background:#5a5a5e"></div>
<div class="a" style="left:1132.8px;top:456px;width:1px;height:5px;background:#5a5a5e"></div>
<div class="a" style="left:1172.3px;top:456px;width:1px;height:10px;background:#8a8a8e"></div>
<div class="t" style="left:1176.3px;top:456px;font-size:11.2px;color:#8a8a8e">15f</div>
<div class="a" style="left:1211.8px;top:456px;width:1px;height:5px;background:#5a5a5e"></div>
<div class="a" style="left:1251.3px;top:456px;width:1px;height:5px;background:#5a5a5e"></div>

<!-- track headers -->
<svg style="left:17px;top:537px" width="16" height="11" viewBox="0 0 23 15"><path d="M0.5 1h13v4h-0.8l-0.7-2.2H8.3V12.7l1.7 0.6V14H4v-0.7l1.7-0.6V2.8H2l-0.7 2.2H0.5z" fill="#8a8a8e"/><path d="M15 1h6.6v1.3l-2 0.5v9.8l2 0.5V14H15v-0.9l2-0.5V2.8l-2-0.5z" fill="#8a8a8e"/></svg>
<svg style="left:44px;top:537px" width="9" height="11" viewBox="0 0 9 11"><rect x="1" y="5" width="7.5" height="5" rx="1" fill="none" stroke="#f2f2f2" stroke-width="1.5"/><path d="M2.7 5V3.5a2 2 0 0 1 4 0" fill="none" stroke="#f2f2f2" stroke-width="1.4"/></svg>
<svg style="left:66px;top:539px" width="12" height="8" viewBox="0 0 12 8"><path d="M1 4q5-6 10 0q-5 6-10 0z" fill="none" stroke="#ececec" stroke-width="1.1"/><circle cx="6" cy="4" r="1.7" fill="none" stroke="#ececec" stroke-width="1"/></svg>

<svg style="left:18px;top:591px" width="12" height="11" viewBox="0 0 12 11"><rect x="0.6" y="0.6" width="10.8" height="9.8" fill="none" stroke="#8a8a8e" stroke-width="1.1"/><path d="M4.5 3.5l3 2-3 2z" fill="#8a8a8e"/></svg>
<svg style="left:44px;top:591px" width="9" height="11" viewBox="0 0 9 11"><rect x="1" y="5" width="7.5" height="5" rx="1" fill="none" stroke="#f2f2f2" stroke-width="1.5"/><path d="M2.7 5V3.5a2 2 0 0 1 4 0" fill="none" stroke="#f2f2f2" stroke-width="1.4"/></svg>
<svg style="left:66px;top:593px" width="12" height="8" viewBox="0 0 12 8"><path d="M1 4q5-6 10 0q-5 6-10 0z" fill="none" stroke="#ececec" stroke-width="1.1"/><circle cx="6" cy="4" r="1.7" fill="none" stroke="#ececec" stroke-width="1"/></svg>
<svg style="left:91px;top:591px" width="12" height="11" viewBox="0 0 12 11"><path d="M1 3.6h2.3L6.3 1.2v8.6L3.3 7.4H1z" fill="none" stroke="#ececec" stroke-width="1.2" stroke-linejoin="round"/><path d="M8.2 3.6q.9 1.9 0 3.8M9.9 2.2q1.7 3.3 0 6.6" fill="none" stroke="#ececec" stroke-width="1.1" stroke-linecap="round"/></svg>
<svg style="left:115px;top:595px" width="11" height="3" viewBox="0 0 11 3"><circle cx="1.5" cy="1.5" r="1.1" fill="#e0e0e0"/><circle cx="5.5" cy="1.5" r="1.1" fill="#e0e0e0"/><circle cx="9.5" cy="1.5" r="1.1" fill="#e0e0e0"/></svg>

<div class="a" style="left:139px;top:578px;width:37px;height:37px;background:#2a2a2d;border:1px dashed #4a4a4e;border-radius:4px"></div>
<svg style="left:151px;top:584px" width="12" height="12" viewBox="0 0 12 12"><path d="M3 8.5l5.5-5.5 1.5 1.5L4.5 10H3z" fill="none" stroke="#e0e0e0" stroke-width="1.1"/><path d="M2 11.3h8" stroke="#e0e0e0" stroke-width="1.2"/></svg>
<div class="t" style="left:142.5px;top:599px;font-size:11.4px;color:#dcdcdc">Cover</div>

<!-- clips -->
<div class="a" style="left:184px;top:533px;width:883px;height:20px;background:#a34d3c;border-radius:4px"></div>
<div class="a" style="left:189px;top:536px;width:110px;height:14px;background:#ab5b4b;border-radius:2px"></div>
<div class="t" style="left:190px;top:536px;font-size:12px;color:#f0e6e2;letter-spacing:-0.1px">So Guys we will now</div>

<div class="a" style="left:184px;top:561px;width:883px;height:72px;background:#044e55;border-radius:4px;overflow:hidden">
  <div class="a" style="left:4.5px;top:2.5px;width:33px;height:13px;background:#0a5d63;border-radius:2px"></div>
  <div class="a" style="left:42.5px;top:2.5px;width:61px;height:13px;background:#0a5d63;border-radius:2px"></div>
  <div class="a" style="left:1px;top:18px;width:881px;height:38px;overflow:hidden;background:#111">
<div class="a" style="left:0.3px;top:0;width:50.2px;height:38px;overflow:hidden;background:radial-gradient(ellipse 17px 4px at 33px 24px,rgba(230,110,30,.95),rgba(200,90,30,0) 100%),linear-gradient(180deg,#1d1e24 0%,#26262c 40%,#302a2c 58%,#3a2a22 64%,#0e0e10 68%,#0e0e10 94%,#e0e0e4 94%)">
<div class="a" style="left:20px;top:-4px;width:12px;height:30px;background:rgba(160,150,170,.45);filter:blur(3px);transform:rotate(-15deg)"></div>
<div class="a" style="left:0.5px;top:6px;width:17px;height:25px;background:#e6e6e8"></div>
<div class="a" style="left:2px;top:1px;width:2px;height:2px;background:#4a90e0"></div><div class="a" style="left:6px;top:1px;width:2px;height:2px;background:#4a90e0"></div>
<div class="a" style="left:33px;top:28px;width:17px;height:8px;background:linear-gradient(90deg,#8ad83a,#5aa828);border-radius:9px 8px 0 0"></div>
</div>
<div class="a" style="left:50.5px;top:0;width:50.2px;height:38px;overflow:hidden;background:radial-gradient(ellipse 17px 4px at 33px 24px,rgba(230,110,30,.95),rgba(200,90,30,0) 100%),linear-gradient(180deg,#1d1e24 0%,#26262c 40%,#302a2c 58%,#3a2a22 64%,#0e0e10 68%,#0e0e10 94%,#e0e0e4 94%)">
<div class="a" style="left:20px;top:-4px;width:12px;height:30px;background:rgba(160,150,170,.45);filter:blur(3px);transform:rotate(-15deg)"></div>
<div class="a" style="left:0.5px;top:6px;width:17px;height:25px;background:#e6e6e8"></div>
<div class="a" style="left:2px;top:1px;width:2px;height:2px;background:#4a90e0"></div><div class="a" style="left:6px;top:1px;width:2px;height:2px;background:#4a90e0"></div>
<div class="a" style="left:33px;top:28px;width:17px;height:8px;background:linear-gradient(90deg,#8ad83a,#5aa828);border-radius:9px 8px 0 0"></div>
</div>
<div class="a" style="left:100.7px;top:0;width:50.2px;height:38px;overflow:hidden;background:radial-gradient(ellipse 17px 4px at 33px 24px,rgba(230,110,30,.95),rgba(200,90,30,0) 100%),linear-gradient(180deg,#1d1e24 0%,#26262c 40%,#302a2c 58%,#3a2a22 64%,#0e0e10 68%,#0e0e10 94%,#e0e0e4 94%)">
<div class="a" style="left:20px;top:-4px;width:12px;height:30px;background:rgba(160,150,170,.45);filter:blur(3px);transform:rotate(-15deg)"></div>
<div class="a" style="left:0.5px;top:6px;width:17px;height:25px;background:#e6e6e8"></div>
<div class="a" style="left:2px;top:1px;width:2px;height:2px;background:#4a90e0"></div><div class="a" style="left:6px;top:1px;width:2px;height:2px;background:#4a90e0"></div>
<div class="a" style="left:33px;top:28px;width:17px;height:8px;background:linear-gradient(90deg,#8ad83a,#5aa828);border-radius:9px 8px 0 0"></div>
</div>
<div class="a" style="left:150.9px;top:0;width:50.2px;height:38px;overflow:hidden;background:radial-gradient(ellipse 17px 4px at 33px 24px,rgba(230,110,30,.95),rgba(200,90,30,0) 100%),linear-gradient(180deg,#1d1e24 0%,#26262c 40%,#302a2c 58%,#3a2a22 64%,#0e0e10 68%,#0e0e10 94%,#e0e0e4 94%)">
<div class="a" style="left:20px;top:-4px;width:12px;height:30px;background:rgba(160,150,170,.45);filter:blur(3px);transform:rotate(-15deg)"></div>
<div class="a" style="left:0.5px;top:6px;width:17px;height:25px;background:#e6e6e8"></div>
<div class="a" style="left:2px;top:1px;width:2px;height:2px;background:#4a90e0"></div><div class="a" style="left:6px;top:1px;width:2px;height:2px;background:#4a90e0"></div>
<div class="a" style="left:33px;top:28px;width:17px;height:8px;background:linear-gradient(90deg,#8ad83a,#5aa828);border-radius:9px 8px 0 0"></div>
</div>
<div class="a" style="left:201.1px;top:0;width:50.2px;height:38px;overflow:hidden;background:radial-gradient(ellipse 17px 4px at 33px 24px,rgba(230,110,30,.95),rgba(200,90,30,0) 100%),linear-gradient(180deg,#1d1e24 0%,#26262c 40%,#302a2c 58%,#3a2a22 64%,#0e0e10 68%,#0e0e10 94%,#e0e0e4 94%)">
<div class="a" style="left:20px;top:-4px;width:12px;height:30px;background:rgba(160,150,170,.45);filter:blur(3px);transform:rotate(-15deg)"></div>
<div class="a" style="left:0.5px;top:6px;width:17px;height:25px;background:#e6e6e8"></div>
<div class="a" style="left:2px;top:1px;width:2px;height:2px;background:#4a90e0"></div><div class="a" style="left:6px;top:1px;width:2px;height:2px;background:#4a90e0"></div>
<div class="a" style="left:33px;top:28px;width:17px;height:8px;background:linear-gradient(90deg,#8ad83a,#5aa828);border-radius:9px 8px 0 0"></div>
</div>
<div class="a" style="left:251.3px;top:0;width:50.2px;height:38px;overflow:hidden;background:radial-gradient(ellipse 17px 4px at 33px 24px,rgba(230,110,30,.95),rgba(200,90,30,0) 100%),linear-gradient(180deg,#1d1e24 0%,#26262c 40%,#302a2c 58%,#3a2a22 64%,#0e0e10 68%,#0e0e10 94%,#e0e0e4 94%)">
<div class="a" style="left:20px;top:-4px;width:12px;height:30px;background:rgba(160,150,170,.45);filter:blur(3px);transform:rotate(-15deg)"></div>
<div class="a" style="left:0.5px;top:6px;width:17px;height:25px;background:#e6e6e8"></div>
<div class="a" style="left:2px;top:1px;width:2px;height:2px;background:#4a90e0"></div><div class="a" style="left:6px;top:1px;width:2px;height:2px;background:#4a90e0"></div>
<div class="a" style="left:33px;top:28px;width:17px;height:8px;background:linear-gradient(90deg,#8ad83a,#5aa828);border-radius:9px 8px 0 0"></div>
</div>
<div class="a" style="left:301.5px;top:0;width:50.2px;height:38px;overflow:hidden;background:radial-gradient(ellipse 17px 4px at 33px 24px,rgba(230,110,30,.95),rgba(200,90,30,0) 100%),linear-gradient(180deg,#1d1e24 0%,#26262c 40%,#302a2c 58%,#3a2a22 64%,#0e0e10 68%,#0e0e10 94%,#e0e0e4 94%)">
<div class="a" style="left:20px;top:-4px;width:12px;height:30px;background:rgba(160,150,170,.45);filter:blur(3px);transform:rotate(-15deg)"></div>
<div class="a" style="left:0.5px;top:6px;width:17px;height:25px;background:#e6e6e8"></div>
<div class="a" style="left:2px;top:1px;width:2px;height:2px;background:#4a90e0"></div><div class="a" style="left:6px;top:1px;width:2px;height:2px;background:#4a90e0"></div>
<div class="a" style="left:33px;top:28px;width:17px;height:8px;background:linear-gradient(90deg,#8ad83a,#5aa828);border-radius:9px 8px 0 0"></div>
</div>
<div class="a" style="left:351.7px;top:0;width:50.2px;height:38px;overflow:hidden;background:radial-gradient(ellipse 17px 4px at 33px 24px,rgba(230,110,30,.95),rgba(200,90,30,0) 100%),linear-gradient(180deg,#1d1e24 0%,#26262c 40%,#302a2c 58%,#3a2a22 64%,#0e0e10 68%,#0e0e10 94%,#e0e0e4 94%)">
<div class="a" style="left:20px;top:-4px;width:12px;height:30px;background:rgba(160,150,170,.45);filter:blur(3px);transform:rotate(-15deg)"></div>
<div class="a" style="left:0.5px;top:6px;width:17px;height:25px;background:#e6e6e8"></div>
<div class="a" style="left:2px;top:1px;width:2px;height:2px;background:#4a90e0"></div><div class="a" style="left:6px;top:1px;width:2px;height:2px;background:#4a90e0"></div>
<div class="a" style="left:33px;top:28px;width:17px;height:8px;background:linear-gradient(90deg,#8ad83a,#5aa828);border-radius:9px 8px 0 0"></div>
</div>
<div class="a" style="left:401.9px;top:0;width:50.2px;height:38px;overflow:hidden;background:radial-gradient(ellipse 17px 4px at 33px 24px,rgba(230,110,30,.95),rgba(200,90,30,0) 100%),linear-gradient(180deg,#1d1e24 0%,#26262c 40%,#302a2c 58%,#3a2a22 64%,#0e0e10 68%,#0e0e10 94%,#e0e0e4 94%)">
<div class="a" style="left:20px;top:-4px;width:12px;height:30px;background:rgba(160,150,170,.45);filter:blur(3px);transform:rotate(-15deg)"></div>
<div class="a" style="left:0.5px;top:6px;width:17px;height:25px;background:#e6e6e8"></div>
<div class="a" style="left:2px;top:1px;width:2px;height:2px;background:#4a90e0"></div><div class="a" style="left:6px;top:1px;width:2px;height:2px;background:#4a90e0"></div>
<div class="a" style="left:33px;top:28px;width:17px;height:8px;background:linear-gradient(90deg,#8ad83a,#5aa828);border-radius:9px 8px 0 0"></div>
</div>
<div class="a" style="left:452.1px;top:0;width:50.2px;height:38px;overflow:hidden;background:radial-gradient(ellipse 17px 4px at 33px 24px,rgba(230,110,30,.95),rgba(200,90,30,0) 100%),linear-gradient(180deg,#1d1e24 0%,#26262c 40%,#302a2c 58%,#3a2a22 64%,#0e0e10 68%,#0e0e10 94%,#e0e0e4 94%)">
<div class="a" style="left:20px;top:-4px;width:12px;height:30px;background:rgba(160,150,170,.45);filter:blur(3px);transform:rotate(-15deg)"></div>
<div class="a" style="left:0.5px;top:6px;width:17px;height:25px;background:#e6e6e8"></div>
<div class="a" style="left:2px;top:1px;width:2px;height:2px;background:#4a90e0"></div><div class="a" style="left:6px;top:1px;width:2px;height:2px;background:#4a90e0"></div>
<div class="a" style="left:33px;top:28px;width:17px;height:8px;background:linear-gradient(90deg,#8ad83a,#5aa828);border-radius:9px 8px 0 0"></div>
</div>
<div class="a" style="left:502.3px;top:0;width:50.2px;height:38px;overflow:hidden;background:radial-gradient(ellipse 17px 4px at 33px 24px,rgba(230,110,30,.95),rgba(200,90,30,0) 100%),linear-gradient(180deg,#1d1e24 0%,#26262c 40%,#302a2c 58%,#3a2a22 64%,#0e0e10 68%,#0e0e10 94%,#e0e0e4 94%)">
<div class="a" style="left:20px;top:-4px;width:12px;height:30px;background:rgba(160,150,170,.45);filter:blur(3px);transform:rotate(-15deg)"></div>
<div class="a" style="left:0.5px;top:6px;width:17px;height:25px;background:#e6e6e8"></div>
<div class="a" style="left:2px;top:1px;width:2px;height:2px;background:#4a90e0"></div><div class="a" style="left:6px;top:1px;width:2px;height:2px;background:#4a90e0"></div>
<div class="a" style="left:33px;top:28px;width:17px;height:8px;background:linear-gradient(90deg,#8ad83a,#5aa828);border-radius:9px 8px 0 0"></div>
</div>
<div class="a" style="left:552.5px;top:0;width:50.2px;height:38px;overflow:hidden;background:radial-gradient(ellipse 17px 4px at 33px 24px,rgba(230,110,30,.95),rgba(200,90,30,0) 100%),linear-gradient(180deg,#1d1e24 0%,#26262c 40%,#302a2c 58%,#3a2a22 64%,#0e0e10 68%,#0e0e10 94%,#e0e0e4 94%)">
<div class="a" style="left:20px;top:-4px;width:12px;height:30px;background:rgba(160,150,170,.45);filter:blur(3px);transform:rotate(-15deg)"></div>
<div class="a" style="left:0.5px;top:6px;width:17px;height:25px;background:#e6e6e8"></div>
<div class="a" style="left:2px;top:1px;width:2px;height:2px;background:#4a90e0"></div><div class="a" style="left:6px;top:1px;width:2px;height:2px;background:#4a90e0"></div>
<div class="a" style="left:33px;top:28px;width:17px;height:8px;background:linear-gradient(90deg,#8ad83a,#5aa828);border-radius:9px 8px 0 0"></div>
</div>
<div class="a" style="left:602.7px;top:0;width:50.2px;height:38px;overflow:hidden;background:radial-gradient(ellipse 17px 4px at 33px 24px,rgba(230,110,30,.95),rgba(200,90,30,0) 100%),linear-gradient(180deg,#1d1e24 0%,#26262c 40%,#302a2c 58%,#3a2a22 64%,#0e0e10 68%,#0e0e10 94%,#e0e0e4 94%)">
<div class="a" style="left:20px;top:-4px;width:12px;height:30px;background:rgba(160,150,170,.45);filter:blur(3px);transform:rotate(-15deg)"></div>
<div class="a" style="left:0.5px;top:6px;width:17px;height:25px;background:#e6e6e8"></div>
<div class="a" style="left:2px;top:1px;width:2px;height:2px;background:#4a90e0"></div><div class="a" style="left:6px;top:1px;width:2px;height:2px;background:#4a90e0"></div>
<div class="a" style="left:33px;top:28px;width:17px;height:8px;background:linear-gradient(90deg,#8ad83a,#5aa828);border-radius:9px 8px 0 0"></div>
</div>
<div class="a" style="left:652.9px;top:0;width:50.2px;height:38px;overflow:hidden;background:radial-gradient(ellipse 17px 4px at 33px 24px,rgba(230,110,30,.95),rgba(200,90,30,0) 100%),linear-gradient(180deg,#1d1e24 0%,#26262c 40%,#302a2c 58%,#3a2a22 64%,#0e0e10 68%,#0e0e10 94%,#e0e0e4 94%)">
<div class="a" style="left:20px;top:-4px;width:12px;height:30px;background:rgba(160,150,170,.45);filter:blur(3px);transform:rotate(-15deg)"></div>
<div class="a" style="left:0.5px;top:6px;width:17px;height:25px;background:#e6e6e8"></div>
<div class="a" style="left:2px;top:1px;width:2px;height:2px;background:#4a90e0"></div><div class="a" style="left:6px;top:1px;width:2px;height:2px;background:#4a90e0"></div>
<div class="a" style="left:33px;top:28px;width:17px;height:8px;background:linear-gradient(90deg,#8ad83a,#5aa828);border-radius:9px 8px 0 0"></div>
</div>
<div class="a" style="left:703.1px;top:0;width:50.2px;height:38px;overflow:hidden;background:radial-gradient(ellipse 17px 4px at 33px 24px,rgba(230,110,30,.95),rgba(200,90,30,0) 100%),linear-gradient(180deg,#1d1e24 0%,#26262c 40%,#302a2c 58%,#3a2a22 64%,#0e0e10 68%,#0e0e10 94%,#e0e0e4 94%)">
<div class="a" style="left:20px;top:-4px;width:12px;height:30px;background:rgba(160,150,170,.45);filter:blur(3px);transform:rotate(-15deg)"></div>
<div class="a" style="left:0.5px;top:6px;width:17px;height:25px;background:#e6e6e8"></div>
<div class="a" style="left:2px;top:1px;width:2px;height:2px;background:#4a90e0"></div><div class="a" style="left:6px;top:1px;width:2px;height:2px;background:#4a90e0"></div>
<div class="a" style="left:33px;top:28px;width:17px;height:8px;background:linear-gradient(90deg,#8ad83a,#5aa828);border-radius:9px 8px 0 0"></div>
</div>
<div class="a" style="left:753.3px;top:0;width:50.2px;height:38px;overflow:hidden;background:radial-gradient(ellipse 17px 4px at 33px 24px,rgba(230,110,30,.95),rgba(200,90,30,0) 100%),linear-gradient(180deg,#1d1e24 0%,#26262c 40%,#302a2c 58%,#3a2a22 64%,#0e0e10 68%,#0e0e10 94%,#e0e0e4 94%)">
<div class="a" style="left:20px;top:-4px;width:12px;height:30px;background:rgba(160,150,170,.45);filter:blur(3px);transform:rotate(-15deg)"></div>
<div class="a" style="left:0.5px;top:6px;width:17px;height:25px;background:#e6e6e8"></div>
<div class="a" style="left:2px;top:1px;width:2px;height:2px;background:#4a90e0"></div><div class="a" style="left:6px;top:1px;width:2px;height:2px;background:#4a90e0"></div>
<div class="a" style="left:33px;top:28px;width:17px;height:8px;background:linear-gradient(90deg,#8ad83a,#5aa828);border-radius:9px 8px 0 0"></div>
</div>
<div class="a" style="left:803.5px;top:0;width:50.2px;height:38px;overflow:hidden;background:radial-gradient(ellipse 17px 4px at 33px 24px,rgba(230,110,30,.95),rgba(200,90,30,0) 100%),linear-gradient(180deg,#1d1e24 0%,#26262c 40%,#302a2c 58%,#3a2a22 64%,#0e0e10 68%,#0e0e10 94%,#e0e0e4 94%)">
<div class="a" style="left:20px;top:-4px;width:12px;height:30px;background:rgba(160,150,170,.45);filter:blur(3px);transform:rotate(-15deg)"></div>
<div class="a" style="left:0.5px;top:6px;width:17px;height:25px;background:#e6e6e8"></div>
<div class="a" style="left:2px;top:1px;width:2px;height:2px;background:#4a90e0"></div><div class="a" style="left:6px;top:1px;width:2px;height:2px;background:#4a90e0"></div>
<div class="a" style="left:33px;top:28px;width:17px;height:8px;background:linear-gradient(90deg,#8ad83a,#5aa828);border-radius:9px 8px 0 0"></div>
</div>
<div class="a" style="left:853.7px;top:0;width:50.2px;height:38px;overflow:hidden;background:radial-gradient(ellipse 17px 4px at 33px 24px,rgba(230,110,30,.95),rgba(200,90,30,0) 100%),linear-gradient(180deg,#1d1e24 0%,#26262c 40%,#302a2c 58%,#3a2a22 64%,#0e0e10 68%,#0e0e10 94%,#e0e0e4 94%)">
<div class="a" style="left:20px;top:-4px;width:12px;height:30px;background:rgba(160,150,170,.45);filter:blur(3px);transform:rotate(-15deg)"></div>
<div class="a" style="left:0.5px;top:6px;width:17px;height:25px;background:#e6e6e8"></div>
<div class="a" style="left:2px;top:1px;width:2px;height:2px;background:#4a90e0"></div><div class="a" style="left:6px;top:1px;width:2px;height:2px;background:#4a90e0"></div>
<div class="a" style="left:33px;top:28px;width:17px;height:8px;background:linear-gradient(90deg,#8ad83a,#5aa828);border-radius:9px 8px 0 0"></div>
</div>
  </div>
</div>
<div class="t" style="left:191px;top:564px;font-size:12px;color:#e8f4f4">6.png</div>
<div class="t" style="left:228px;top:564px;font-size:12px;color:#e8f4f4;letter-spacing:-0.35px">00:00:02:07</div>

<div class="a" style="left:182px;top:640px;width:888px;height:30px;background:#0c2a56;border:2px solid #f4f4f4;border-bottom:none;border-radius:4px 4px 0 0"></div>
<div class="a" style="left:185px;top:642px;width:243px;height:16px;background:#16345f"></div>
<div class="t" style="left:188.5px;top:643px;font-size:12px;color:#e8eef8;letter-spacing:-0.22px">Workout EDM with a sense of speed(1016505)</div>
<svg style="left:18px;top:654px" width="14" height="8" viewBox="0 0 14 8"><path d="M2 7q0-5 5-5t5 5" fill="none" stroke="#8a8a8e" stroke-width="1.2"/></svg>
<div class="a" style="left:46px;top:657px;width:5px;height:4px;border-radius:3px 3px 0 0;background:#e0e0e0"></div>
<div class="a" style="left:94px;top:657px;width:3px;height:4px;background:#e0e0e0"></div>
<div class="a" style="left:193px;top:659px;width:60px;height:2px;background:repeating-linear-gradient(90deg,#a84840 0 2px,#5a3848 2px 3px)"></div>
<div class="a" style="left:475px;top:659px;width:82px;height:2px;background:repeating-linear-gradient(90deg,#a84840 0 2px,#5a3848 2px 3px)"></div>
<div class="a" style="left:765px;top:659px;width:170px;height:2px;background:repeating-linear-gradient(90deg,#a84840 0 2px,#3a3050 2px 5px)"></div>
<div class="a" style="left:10px;top:661px;width:1262px;height:10px;background:#1b1b1c;border-radius:0 0 8px 8px"></div>

<div class="a" style="left:137px;top:664px;width:1002px;height:5px;background:#3a3a3e;border-radius:3px"></div>


<!-- playhead -->
<div class="a" style="left:893px;top:452px;width:16px;height:18px;background:rgba(255,255,255,.12)"></div>
<div class="a" style="left:895.5px;top:465px;width:1.3px;height:192px;background:#f0f0f0"></div>
<svg style="left:890px;top:452px" width="12" height="16" viewBox="0 0 12 16"><path d="M2 1h8v8l-4 5-4-5z" fill="#1c1c1e" stroke="#f4f4f4" stroke-width="1.6" stroke-linejoin="round"/></svg>

<!-- toast -->
<div class="a" style="left:586px;top:495px;width:108px;height:32px;background:#fff;border-radius:16px"></div>
<div class="t" style="left:602.5px;top:505px;font-size:11.9px;color:#222">Noise reduced</div>


</body></html>
